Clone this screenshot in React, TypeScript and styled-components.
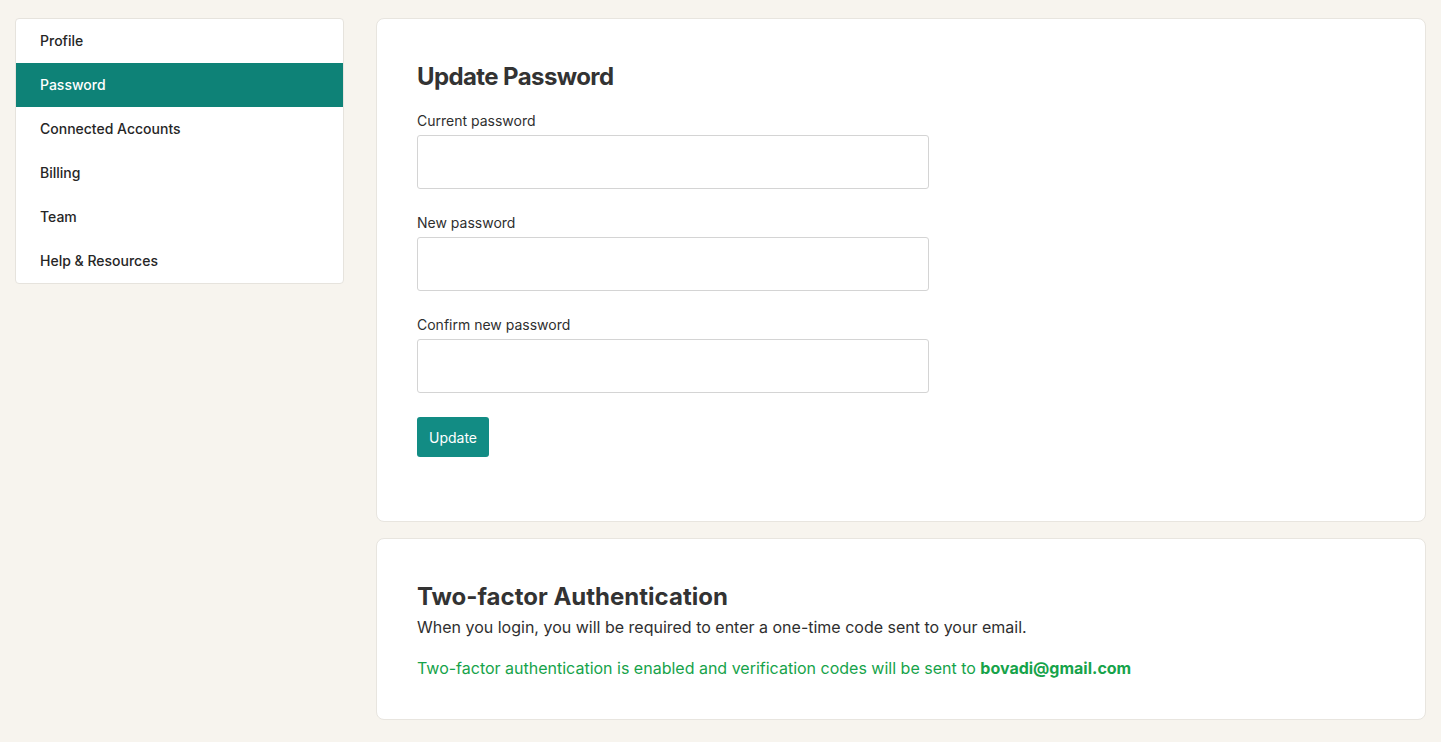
import React from "react";
import styled, { createGlobalStyle } from "styled-components";

const Global = createGlobalStyle`
  * { box-sizing: border-box; }
  html, body { margin: 0; padding: 0; }
  body {
    background: #f7f4ee;
    font-family: Inter, "Noto Sans", sans-serif;
    color: #2f2f2f;
  }
`;

const Page = styled.div`
  display: flex;
  align-items: flex-start;
  gap: 32px;
  padding: 18px 15px 22px 15px;
`;

const Sidebar = styled.nav`
  width: 329px;
  flex-shrink: 0;
  background: #fff;
  border: 1px solid #e6e3dd;
  border-radius: 4px;
  overflow: hidden;
  display: flex;
  flex-direction: column;
`;

const NavItem = styled.a<{ $active?: boolean }>`
  display: flex;
  align-items: center;
  height: 44px;
  padding: 0 24px 2px;
  font-size: 14px;
  font-weight: 500;
  color: ${(p) => (p.$active ? "#fff" : "#262626")};
  background: ${(p) => (p.$active ? "#0e8277" : "transparent")};
  text-decoration: none;
  cursor: pointer;
`;

const Main = styled.main`
  flex: 1;
  display: flex;
  flex-direction: column;
  gap: 16px;
`;

const Card = styled.section<{ $pt?: number; $pb?: number }>`
  background: #fff;
  border: 1px solid #e8e5df;
  border-radius: 8px;
  padding: ${(p) => p.$pt ?? 42}px 40px ${(p) => p.$pb ?? 40}px 40px;
`;

const Title = styled.h2<{ $tight?: boolean }>`
  margin: 0;
  font-size: 24px;
  line-height: 32px;
  font-weight: 700;
  color: #333;
  letter-spacing: ${(p) => (p.$tight ? "-0.6px" : "0")};
`;

const Form = styled.form`
  width: 512px;
  display: flex;
  flex-direction: column;
  margin-top: 18px;
`;

const Field = styled.div`
  display: flex;
  flex-direction: column;
  gap: 4px;
  margin-bottom: 24px;
`;

const Label = styled.label`
  font-size: 14px;
  line-height: 20px;
  color: #2f2f2f;
`;

const Input = styled.input`
  height: 54px;
  width: 100%;
  border: 1px solid #d4d4d4;
  border-radius: 3px;
  padding: 0 12px;
  font-size: 14px;
  font-family: inherit;
  background: #fff;
  outline: none;
`;

const Button = styled.button`
  align-self: flex-start;
  height: 40px;
  padding: 0 12px;
  background: #128c84;
  color: #fff;
  border: none;
  border-radius: 3px;
  font-family: inherit;
  font-size: 14px;
  cursor: pointer;
  margin-top: 0;
`;

const Desc = styled.p`
  margin: 2px 0 0;
  font-size: 16px;
  line-height: 24px;
  color: #2f2f2f;
`;

const Status = styled.p`
  margin: 17px 0 0;
  font-size: 16px;
  line-height: 24px;
  color: #16a34a;
  b { font-weight: 700; }
`;

const items = ["Profile", "Password", "Connected Accounts", "Billing", "Team", "Help & Resources"];

export default function App() {
  return (
    <>
      <Global />
      <Page>
        <Sidebar>
          {items.map((i) => (
            <NavItem key={i} $active={i === "Password"}>{i}</NavItem>
          ))}
        </Sidebar>
        <Main>
          <Card $pb={64}>
            <Title $tight>Update Password</Title>
            <Form onSubmit={(e) => e.preventDefault()}>
              <Field>
                <Label>Current password</Label>
                <Input type="password" />
              </Field>
              <Field>
                <Label>New password</Label>
                <Input type="password" />
              </Field>
              <Field>
                <Label>Confirm new password</Label>
                <Input type="password" />
              </Field>
              <Button type="submit">Update</Button>
            </Form>
          </Card>
          <Card $pt={42} $pb={39}>
            <Title>Two-factor Authentication</Title>
            <Desc>When you login, you will be required to enter a one-time code sent to your email.</Desc>
            <Status>
              Two-factor authentication is enabled and verification codes will be sent to <b>bovadi@gmail.com</b>
            </Status>
          </Card>
        </Main>
      </Page>
    </>
  );
}
